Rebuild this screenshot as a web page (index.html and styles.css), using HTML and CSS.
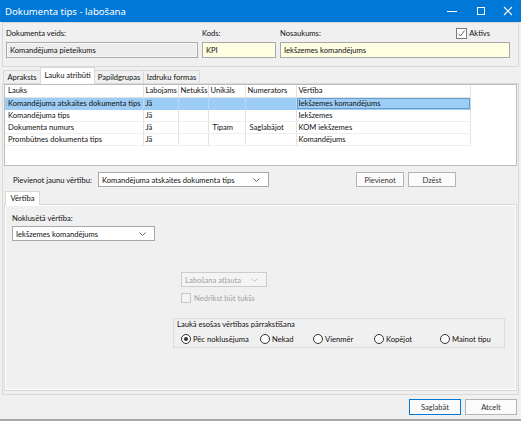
FILE: index.html
```html
<!DOCTYPE html>
<html lang="lv">
<head>
<meta charset="utf-8">
<title>Dokumenta tips - labošana</title>
<link rel="stylesheet" href="styles.css">
</head>
<body>
<div class="window">
  <div class="titlebar">
    <span class="title">Dokumenta tips - labošana</span>
    <div class="controls">
      <div class="ctl"><svg width="10" height="10" viewBox="0 0 10 10"><line x1="0" y1="5.5" x2="10" y2="5.5" stroke="#fff" stroke-width="1"/></svg></div>
      <div class="ctl"><svg width="10" height="10" viewBox="0 0 10 10"><rect x="1.5" y="1.5" width="7" height="7" fill="none" stroke="#fff" stroke-width="1"/></svg></div>
      <div class="ctl close"><svg width="10" height="10" viewBox="0 0 10 10"><path d="M1 1 L9 9 M9 1 L1 9" stroke="#fff" stroke-width="1.1"/></svg></div>
    </div>
  </div>
  <div class="client">
    <div class="head-panel">
      <div class="field f-type">
        <div class="lbl">Dokumenta veids:</div>
        <div class="input ro">Komandējuma pieteikums</div>
      </div>
      <div class="field f-code">
        <div class="lbl">Kods:</div>
        <div class="input yellow">KPI</div>
      </div>
      <div class="field f-name">
        <div class="lbl label-row">
          <span>Nosaukums:</span>
          <span class="check">
            <svg class="cbox" width="11" height="11" viewBox="0 0 11 11"><rect x="0.5" y="0.5" width="10" height="10" fill="#fff" stroke="#7a7a7a"/><path d="M2.5 5.8 L4.5 8 L8.5 2.5" fill="none" stroke="#555" stroke-width="0.9"/></svg>
            Aktīvs
          </span>
        </div>
        <div class="input yellow">Iekšzemes komandējums</div>
      </div>
    </div>

    <div class="tabs">
      <div class="tab w-apr">Apraksts</div>
      <div class="tab active w-lauk">Lauku atribūti</div>
      <div class="tab w-pap">Papildgrupas</div>
      <div class="tab w-izd">Izdruku formas</div>
    </div>

    <div class="tabpage">
      <div class="grid">
        <table class="gtable">
          <colgroup>
            <col class="c1"><col class="c2"><col class="c3"><col class="c4"><col class="c5"><col class="c6">
          </colgroup>
          <thead>
            <tr><th>Lauks</th><th>Labojams</th><th>Netukšs</th><th>Unikāls</th><th>Numerators</th><th>Vērtība</th></tr>
          </thead>
          <tbody>
            <tr class="sel"><td>Komandējuma atskaites dokumenta tips</td><td>Jā</td><td></td><td></td><td></td><td class="focus">Iekšzemes komandējums</td></tr>
            <tr><td>Komandējuma tips</td><td>Jā</td><td></td><td></td><td></td><td>Iekšzemes</td></tr>
            <tr><td>Dokumenta numurs</td><td>Jā</td><td></td><td>Tipam</td><td>Saglabājot</td><td>KOM iekšzemes</td></tr>
            <tr><td>Prombūtnes dokumenta tips</td><td>Jā</td><td></td><td></td><td></td><td>Komandējums</td></tr>
          </tbody>
        </table>
      </div>

      <div class="add-row">
        <span class="add-label">Pievienot jaunu vērtību:</span>
        <div class="combo add-combo"><span>Komandējuma atskaites dokumenta tips</span><svg class="chev" width="7" height="4" viewBox="0 0 7 4"><path d="M0.5 0.5 L3.5 3.5 L6.5 0.5" fill="none" stroke="#555" stroke-width="0.9"/></svg></div>
        <div class="add-btns">
          <div class="btn">Pievienot</div>
          <div class="btn">Dzēst</div>
        </div>
      </div>

      <div class="tabs inner-tabs">
        <div class="tab active w-vert">Vērtība</div>
      </div>

      <div class="inner-panel">
        <div class="lbl2">Noklusētā vērtība:</div>
        <div class="combo def-combo"><span>Iekšzemes komandējums</span><svg class="chev" width="7" height="4" viewBox="0 0 7 4"><path d="M0.5 0.5 L3.5 3.5 L6.5 0.5" fill="none" stroke="#555" stroke-width="0.9"/></svg></div>

        <div class="combo disabled edit-combo"><span>Labošana atļauta</span><svg class="chev" width="7" height="4" viewBox="0 0 7 4"><path d="M0.5 0.5 L3.5 3.5 L6.5 0.5" fill="none" stroke="#bdbdbd" stroke-width="0.9"/></svg></div>

        <div class="dis-check">
          <span class="dbox"></span>
          <span>Nedrīkst būt tukšs</span>
        </div>

        <div class="group">
          <span class="group-title">Laukā esošas vērtības pārrakstīšana</span>
          <div class="radios">
            <span class="radio r1"><span class="rc on"></span>Pēc noklusējuma</span>
            <span class="radio r2"><span class="rc"></span>Nekad</span>
            <span class="radio r3"><span class="rc"></span>Vienmēr</span>
            <span class="radio r4"><span class="rc"></span>Kopējot</span>
            <span class="radio r5"><span class="rc"></span>Mainot tipu</span>
          </div>
        </div>
      </div>
    </div>

    <div class="footer">
      <div class="btn fbtn primary">Saglabāt</div>
      <div class="btn fbtn">Atcelt</div>
    </div>
  </div>
</div>
</body>
</html>
```

FILE: styles.css
```css
* { box-sizing: border-box; }
html, body { margin: 0; padding: 0; }
body {
  font-family: "Lato", "Noto Sans", sans-serif;
  font-size: 7.6px;
  color: #111;
  background: #f0f0f0;
}
.window {
  width: 521px;
  height: 421px;
  display: flex;
  flex-direction: column;
  background: #f0f0f0;
  border-bottom: 2px solid #a8a8a8;
  overflow: hidden;
}
.titlebar {
  height: 22px;
  flex: none;
  background: #0078d7;
  color: #fff;
  display: flex;
  align-items: center;
}
.title { font-family: "Noto Sans", sans-serif; font-size: 9.6px; padding-left: 5px; }
.controls { margin-left: auto; display: flex; height: 100%; }
.ctl { width: 29px; display: flex; align-items: center; justify-content: center; }
.ctl.close { width: 26px; }

.client {
  flex: 1;
  display: flex;
  flex-direction: column;
  padding: 0 2px;
}

/* header */
.head-panel {
  flex: none;
  height: 45px;
  border: 1px solid #d9d9d9;
  display: flex;
  gap: 4px;
  padding: 4px 0 0 3px;
}
.field { display: flex; flex-direction: column; }
.f-type { width: 192px; }
.f-code { width: 74px; }
.f-name { width: 230px; }
.lbl { height: 13px; line-height: 13px; margin-bottom: 2px; }
.label-row { display: flex; align-items: center; }
.check { margin-left: auto; margin-right: 20px; display: flex; align-items: center; gap: 2px; }
.input {
  height: 16px;
  border: 1px solid #a9a9a9;
  line-height: 14px;
  padding: 0 3px;
  white-space: nowrap;
  overflow: hidden;
}
.input.ro { background: #ededed; box-shadow: inset 0 0 0 1px #f7f7f7; }
.input.yellow { background: #ffffe1; }

/* tabs */
.tabs {
  flex: none;
  display: flex;
  align-items: flex-end;
  height: 16px;
  padding-left: 1px;
}
.tab {
  height: 13px;
  line-height: 12px;
  border: 1px solid #d9d9d9;
  border-bottom: none;
  background: #f0f0f0;
  text-align: center;
  margin-right: -1px;
  white-space: nowrap;
}
.tab.active {
  height: 17px;
  line-height: 15px;
  background: #fff;
  margin-bottom: -1px;
  position: relative;
  z-index: 1;
}
.w-apr { width: 38px; }
.w-lauk { width: 55px; }
.w-pap { width: 50px; }
.w-izd { width: 57px; }

.tabpage {
  flex: none;
  height: 312px;
  border: 1px solid #d9d9d9;
  padding: 0 1px;
  display: flex;
  flex-direction: column;
}

/* grid */
.grid {
  height: 82px;
  flex: none;
  background: #fff;
  border: 1px solid #bdbdbd;
}
.gtable {
  border-collapse: collapse;
  table-layout: fixed;
  width: 465px;
}
.c1 { width: 138px; }
.c2 { width: 35px; }
.c3 { width: 30px; }
.c4 { width: 37px; }
.c5 { width: 51px; }
.c6 { width: 174px; }
.gtable th, .gtable td {
  height: 12px;
  line-height: 11px;
  padding: 0 0 0 2px;
  text-align: left;
  font-weight: normal;
  white-space: nowrap;
  overflow: hidden;
  border-right: 1px solid #e3e3e3;
  border-bottom: 1px solid #efefef;
}
.gtable th { border-bottom: 1px solid #e3e3e3; }
.gtable td:first-child, .gtable th:first-child { padding-left: 3px; }
.gtable td:nth-child(4), .gtable td:nth-child(5) { padding-left: 4px; }
.gtable tr.sel td { background: #9dcdf5; border-right-color: #b6daf7; border-bottom-color: #9dcdf5; }
.gtable tr.sel td.focus { box-shadow: inset 0 0 0 1px #6a9ccb; }

/* add row */
.add-row {
  flex: none;
  margin-top: 6px;
  height: 15px;
  display: flex;
  align-items: center;
  padding-left: 9px;
}
.add-label { width: 85px; white-space: nowrap; }
.combo {
  height: 15px;
  border: 1px solid #a9a9a9;
  background: #fff;
  display: flex;
  align-items: center;
  padding: 0 0 0 3px;
  white-space: nowrap;
}
.combo span { flex: 1; overflow: hidden; }
.combo .chev { margin: 0 8px 0 4px; flex: none; }
.add-combo { width: 171px; }
.add-btns { margin-left: auto; margin-right: 61px; display: flex; gap: 4px; }
.btn {
  height: 15px;
  width: 48px;
  border: 1px solid #b4b4b4;
  background: #fbfbfb;
  display: flex;
  align-items: center;
  justify-content: center;
  white-space: nowrap;
  color: #333;
}

.inner-tabs { height: 13px; margin-top: 4px; padding-left: 1px; }
.inner-tabs .tab.active { height: 14px; line-height: 13px; }
.w-vert { width: 35px; }

.inner-panel {
  flex: none;
  height: 187px;
  border: 1px solid #d9d9d9;
  box-shadow: inset 0 0 0 1px #fff;
  padding: 7px 0 0 7px;
  display: flex;
  flex-direction: column;
  align-items: flex-start;
}
.lbl2 { height: 12px; line-height: 12px; margin-bottom: 2px; }
.def-combo { width: 143px; }
.combo.disabled {
  background: #f4f4f4;
  border-color: #cccccc;
  color: #a3a3a3;
}
.edit-combo { width: 86px; margin-top: 31px; margin-left: 169px; }
.dis-check {
  margin-top: 6px;
  margin-left: 169px;
  height: 10px;
  display: flex;
  align-items: center;
  gap: 3px;
  color: #a3a3a3;
}
.dbox { width: 10px; height: 10px; border: 1px solid #c6c6c6; background: #f4f4f4; }

.group {
  margin-top: 15px;
  margin-left: 161px;
  width: 332px;
  height: 30px;
  border: 1px solid #dcdcdc;
  padding: 0 0 0 7px;
}
.group-title {
  display: inline-block;
  height: 10px;
  line-height: 10px;
  margin-top: -6px;
  margin-left: -5px;
  padding: 0 1px;
  background: #f0f0f0;
}
.radios { display: flex; align-items: center; height: 10px; margin-top: 5px; }
.radio { display: flex; align-items: center; gap: 2px; white-space: nowrap; }
.r1 { width: 79px; }
.r2 { width: 53px; }
.r3 { width: 61px; }
.r4 { width: 66px; }
.rc {
  width: 10px;
  height: 10px;
  border: 1px solid #333;
  border-radius: 50%;
  background: #fff;
  display: flex;
  align-items: center;
  justify-content: center;
  flex: none;
}
.rc.on::after {
  content: "";
  width: 4px;
  height: 4px;
  border-radius: 50%;
  background: #333;
}

.footer {
  flex: 1;
  display: flex;
  justify-content: flex-end;
  align-items: flex-start;
  gap: 4px;
  padding: 4px 2px 0 0;
}
.fbtn { width: 52px; height: 16px; }
.fbtn.primary { border-color: #0078d7; }
```
